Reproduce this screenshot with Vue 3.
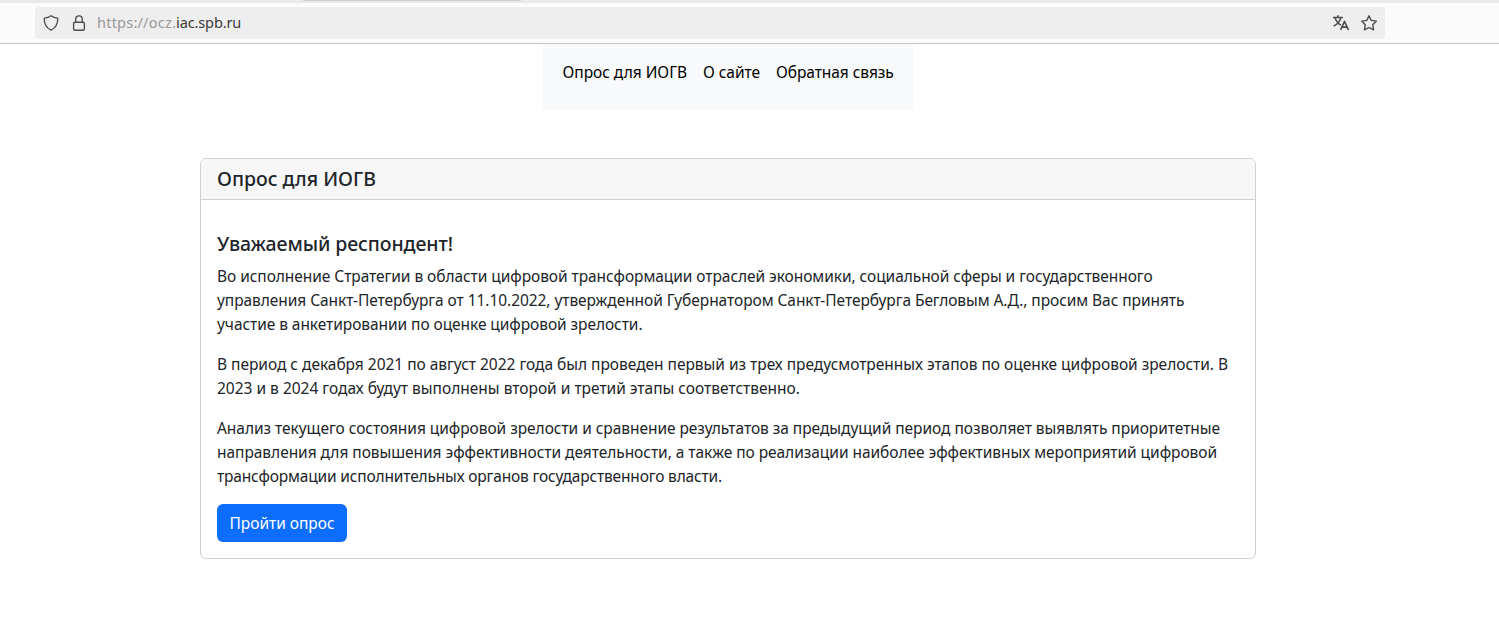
<script setup>
const nav = [
  { text: 'Опрос для ИОГВ', ls: -0.02 },
  { text: 'О сайте', ls: -0.06 },
  { text: 'Обратная связь', ls: -0.06 },
]
// ls is the tracking of each line, in pixels
const paragraphs = [
  [
    { text: 'Во исполнение Стратегии в области цифровой трансформации отраслей экономики, социальной сферы и государственного', ls: -0.056 },
    { text: 'управления Санкт-Петербурга от 11.10.2022, утвержденной Губернатором Санкт-Петербурга Бегловым А.Д., просим Вас принять', ls: -0.06 },
    { text: 'участие в анкетировании по оценке цифровой зрелости.', ls: -0.06 },
  ],
  [
    { text: 'В период с декабря 2021 по август 2022 года был проведен первый из трех предусмотренных этапов по оценке цифровой зрелости. В', ls: -0.023 },
    { text: '2023 и в 2024 годах будут выполнены второй и третий этапы соответственно.', ls: -0.004 },
  ],
  [
    { text: 'Анализ текущего состояния цифровой зрелости и сравнение результатов за предыдущий период позволяет выявлять приоритетные', ls: -0.042 },
    { text: 'направления для повышения эффективности деятельности, а также по реализации наиболее эффективных мероприятий цифровой', ls: -0.04 },
    { text: 'трансформации исполнительных органов государственного власти.', ls: -0.164 },
  ],
]
const tracking = (ls) => ({ letterSpacing: ls + 'px' })
</script>

<template>
  <div class="page">
    <header class="toolbar">
      <div class="tabstrip"><div class="tab-shadow"></div></div>
      <div class="urlbar">
        <svg class="ic shield" viewBox="0 0 16 16"><path d="M8 .8c2 1.500 4.200 2.100 6.700 2.300.3 5.200-1.500 9.300-6.700 12.100C2.800 12.400 1 8.300 1.300 3.100 3.800 2.900 6 2.300 8 .8z" /></svg>
        <svg class="ic lock" viewBox="0 0 16 16"><rect x="2.600" y="7.200" width="10.800" height="8" rx="1.500" /><path d="M4.700 7V4.200a3.300 3.300 0 0 1 6.600 0V7" /></svg>
        <div class="url"><span class="dim">https://ocz.</span><span class="host">iac.spb.ru</span></div>
        <svg class="ic translate" viewBox="0 0 16 16"><path d="M0 2.500h9.800M4.900.3v2.200M2 2.600c1 3.500 3 5.800 5.800 7.600M7.900 2.600C6.900 6.300 4.200 9.300.7 10.900M7.600 14.800l3.900-8.500 3.900 8.500M9 12.100h5" /></svg>
        <svg class="ic star" viewBox="0 0 16 16"><path d="M8 .7l2.200 4.700 5.200.7-3.700 3.600.9 5.200L8 12.500l-4.600 2.400.9-5.200L.6 6.100l5.200-.7z" /></svg>
      </div>
    </header>
    <nav class="nav"><a v-for="n in nav" :key="n.text" :style="tracking(n.ls)">{{ n.text }}</a></nav>
    <main class="card">
      <h5 class="card-header">Опрос для ИОГВ</h5>
      <section class="card-body">
        <h5 class="greeting">Уважаемый респондент!</h5>
        <p v-for="(p, i) in paragraphs" :key="i"><span v-for="l in p" :key="l.text" class="line" :style="tracking(l.ls)">{{ l.text }}</span></p>
        <button class="btn">Пройти опрос</button>
      </section>
    </main>
  </div>
</template>

<style>
body { margin: 0; background: #fff; }
</style>
<style scoped>
.page { height: 625px; overflow: hidden; font: 400 15.5px/24px "Noto Sans", sans-serif; color: #212529; }
.toolbar { height: 44px; box-sizing: border-box; background: #fbfbfb; border-bottom: 1px solid #c4c4c4; }
.tabstrip { height: 3px; background: #eaeaea; overflow: hidden; }
.tab-shadow { width: 218px; height: 1px; margin-left: 303px; background: #cfcfcf; }
.urlbar { display: flex; align-items: center; box-sizing: border-box; width: 1350px; height: 32px; margin: 4px 0 0 35px; padding: 0 8px; background: #eee; border-radius: 4px; }
.ic { width: 16px; height: 16px; fill: none; stroke: #4c4c50; stroke-width: 1.35; stroke-linejoin: round; flex: none; overflow: visible; }
.lock { margin-left: 12px; }
.url { margin: 0 0 2px 10px; font-size: 14.5px; color: #3a3a3a; white-space: nowrap; }
.dim { color: #999; letter-spacing: 0.22px; }
.host { letter-spacing: -0.12px; }
.translate { margin-left: auto; stroke-width: 1.6; }
.star { margin-left: 12px; }
.nav { display: flex; gap: 16px; box-sizing: border-box; width: 370px; height: 66px; margin-left: 543px; padding: 16px 19px 16px 19.5px; background: #f8f9fa; color: #000; white-space: nowrap; }
.card { width: 1056px; height: 401px; box-sizing: border-box; margin: 48px 0 0 200px; border: 1px solid #d0d0d0; border-radius: 6px; overflow: hidden; }
h5 { margin: 0; font-size: 19.5px; font-weight: 500; line-height: 24px; }
.card-header { padding: 8px 16px; background: #f7f7f7; border-bottom: 1px solid #d0d0d0; letter-spacing: -0.01px; }
.card-body { padding: 32px 16px 16px; }
.greeting { margin-bottom: 8px; letter-spacing: -0.08px; }
p { margin: 0 0 16px; white-space: nowrap; }
.line { display: block; }
.btn { display: block; width: 130px; height: 38px; padding: 0; border: 0; border-radius: 6px; background: #0d6efd; color: #fff; font: inherit; letter-spacing: -0.03px; white-space: nowrap; }
</style>
